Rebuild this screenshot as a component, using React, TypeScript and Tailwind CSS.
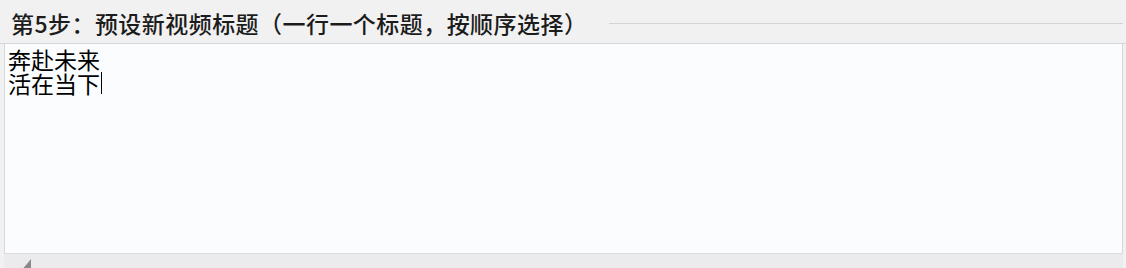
export default function App() {
  return (
    <div
      className="flex h-[268px] w-[1126px] flex-col overflow-hidden bg-[#f1f1f2]"
      style={{ fontFamily: '"Noto Sans CJK SC", "Noto Sans", sans-serif' }}
    >
      <div className="flex h-[44px] shrink-0 items-center border-b border-[#d6d6d8] pl-[11px] pt-[4px]">
        <span className="whitespace-nowrap text-[23px] font-medium leading-none tracking-[0.45px] text-[#1c1c1c]">
          第5步：预设新视频标题（一行一个标题，按顺序选择）
        </span>
        <div className="ml-[22px] mr-[3px] h-px flex-1 bg-[#d4d4d6]" />
      </div>
      <div className="ml-[4px] mr-[3px] flex-1 border-l border-r border-[#d8d8da] bg-[#fafcfe] pl-[3px] pt-[3px]">
        <div className="text-[23px] leading-[24px] text-black">奔赴未来</div>
        <div className="flex items-center text-[23px] leading-[24px] text-black">
          <span>活在当下</span>
          <span className="ml-[1px] inline-block h-[22px] w-px bg-black" />
        </div>
      </div>
      <div className="relative ml-[4px] mr-[3px] h-[15px] shrink-0 border-t border-[#dcdcde] bg-[#ebebed]">
        <svg className="absolute left-[15px] top-[5px]" width="14" height="12" viewBox="0 0 14 12">
          <polygon points="12,0 12,12 2,12" fill="#8a8a8c" />
        </svg>
      </div>
    </div>
  );
}
